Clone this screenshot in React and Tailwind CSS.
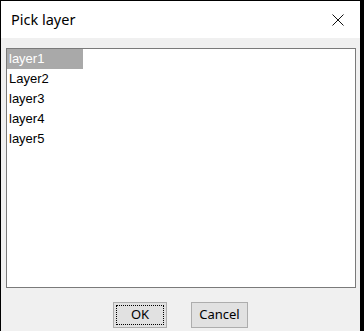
import React, { useState } from 'react';

const layers = ['layer1', 'Layer2', 'layer3', 'layer4', 'layer5'];

const App = () => {
  const [selected, setSelected] = useState(0);

  return (
    <div className="w-[364px] h-[331px] bg-black overflow-hidden" style={{ fontFamily: '"Segoe UI", "Noto Sans", "Liberation Sans", sans-serif' }}>
      <div className="ml-px mt-px w-[359px] h-[330px] flex flex-col bg-[#f0f0f0]">
        {/* Title bar */}
        <div className="h-[37px] bg-white flex items-center justify-between pl-[10px] pr-[16px]">
          <span className="text-[14.5px] text-black leading-none pb-[1px]">Pick layer</span>
          <svg width="12" height="12" viewBox="0 0 12 12" className="mt-[1px]">
            <path d="M0.5 0.5L11.5 11.5M11.5 0.5L0.5 11.5" stroke="#111" strokeWidth="1" fill="none" />
          </svg>
        </div>

        {/* List */}
        <div className="px-[5px] pt-[10px]">
          <div className="h-[240px] w-[350px] bg-white border border-[#7a7a7a]" style={{ fontFamily: '"Liberation Sans", Arial, sans-serif' }}>
            {layers.map((name, i) => (
              <div
                key={name}
                onClick={() => setSelected(i)}
                className={`h-[20px] flex items-center pl-[2px] text-[13px] ${
                  i === selected ? 'w-[76px] bg-[#a9a9a9] text-white' : 'text-black'
                }`}
              >
                {name}
              </div>
            ))}
          </div>
        </div>

        {/* Buttons */}
        <div className="flex justify-center gap-[24px] pt-[14px]">
          <button className="w-[54px] h-[26px] bg-[#e1e1e1] border border-[#adadad] p-[2px] text-[13px] text-black">
            <div className="w-full h-full border border-dotted border-black flex items-center justify-center">OK</div>
          </button>
          <button className="w-[57px] h-[26px] bg-[#e1e1e1] border border-[#adadad] text-[13px] text-black flex items-center justify-center">
            Cancel
          </button>
        </div>
      </div>
    </div>
  );
};

export default App;
